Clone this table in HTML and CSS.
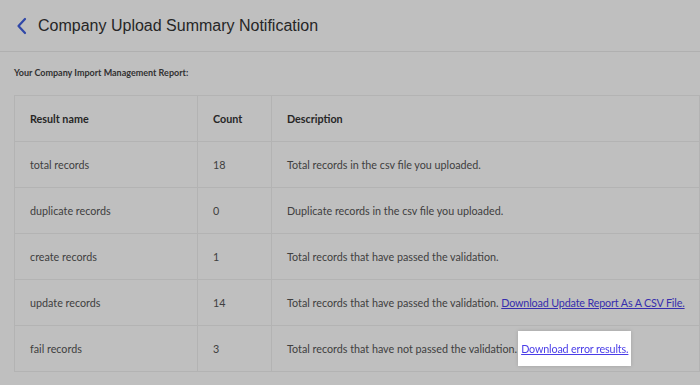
FILE: index.html
```html
<!DOCTYPE html>
<html lang="en">
<head>
    <meta charset="UTF-8">
    <meta name="viewport" content="width=device-width, initial-scale=1.0">
    <title>Company Upload Summary Notification</title>
    <link rel="stylesheet" href="styles.css">
</head>
<body>

    <header class="topbar">
        <a class="back-link" href="#">
            <svg width="12" height="18" viewBox="0 0 12 18">
                <path d="M9 2 L2.5 9 L9 16" fill="none" stroke="#3f5fe0" stroke-width="2.2" stroke-linecap="round" stroke-linejoin="round"/>
            </svg>
        </a>
        <h1>Company Upload Summary Notification</h1>
    </header>

    <main class="report">
        <p class="report-title">Your Company Import Management Report:</p>

        <table class="summary">
            <thead>
                <tr>
                    <th class="col-name">Result name</th>
                    <th class="col-count">Count</th>
                    <th>Description</th>
                </tr>
            </thead>
            <tbody>
                <tr>
                    <td>total records</td>
                    <td>18</td>
                    <td>Total records in the csv file you uploaded.</td>
                </tr>
                <tr>
                    <td>duplicate records</td>
                    <td>0</td>
                    <td>Duplicate records in the csv file you uploaded.</td>
                </tr>
                <tr>
                    <td>create records</td>
                    <td>1</td>
                    <td>Total records that have passed the validation.</td>
                </tr>
                <tr>
                    <td>update records</td>
                    <td>14</td>
                    <td>Total records that have passed the validation. <a href="#">Download Update Report As A CSV File.</a></td>
                </tr>
                <tr>
                    <td>fail records</td>
                    <td>3</td>
                    <td>Total records that have not passed the validation.<a class="tour-target" href="#">Download error results.</a></td>
                </tr>
            </tbody>
        </table>
    </main>

    <!-- dims the page while the tour step points at the error download -->
    <div class="tour-backdrop"></div>

</body>
</html>
```

FILE: styles.css
```css
body {
    font-family: Lato, "Liberation Sans", sans-serif;
    background-color: #fff;
    color: #555;
    margin: 0;
}

.topbar {
    display: flex;
    align-items: center;
    height: 52px;
    padding-left: 16px;
    border-bottom: 1px solid #ebebeb;
    box-sizing: border-box;
}

.back-link {
    display: flex;
    margin-right: 10px;
}

.topbar h1 {
    margin: 0;
    font-family: "Liberation Sans", Arial, sans-serif;
    font-size: 16px;
    font-weight: normal;
    color: #333;
}

.report {
    padding-left: 14px;
}

.report-title {
    margin: 15px 0 16px;
    font-size: 9px;
    font-weight: bold;
    color: #444;
    line-height: 12px;
}

.summary {
    width: 100%;
    border-collapse: collapse;
    font-size: 10.75px;
    table-layout: fixed;
}

.summary th,
.summary td {
    height: 45px;
    padding: 0 15px;
    border: 1px solid #efefef;
    text-align: left;
    white-space: nowrap;
}

.summary th {
    font-weight: bold;
    color: #333;
}

.summary .col-name {
    width: 152px;
}

.summary .col-count {
    width: 43px;
}

.summary a {
    color: #4a3de8;
    letter-spacing: -0.15px;
}

.tour-backdrop {
    position: fixed;
    inset: 0;
    background-color: rgba(0, 0, 0, 0.25);
    z-index: 5;
}

.tour-target {
    position: relative;
    z-index: 10;
    display: inline-block;
    margin-left: 1px;
    padding: 11px 3px;
    background-color: #fff;
    box-shadow: 0px 0px 4px rgba(0, 0, 0, 0.15);
}
```
